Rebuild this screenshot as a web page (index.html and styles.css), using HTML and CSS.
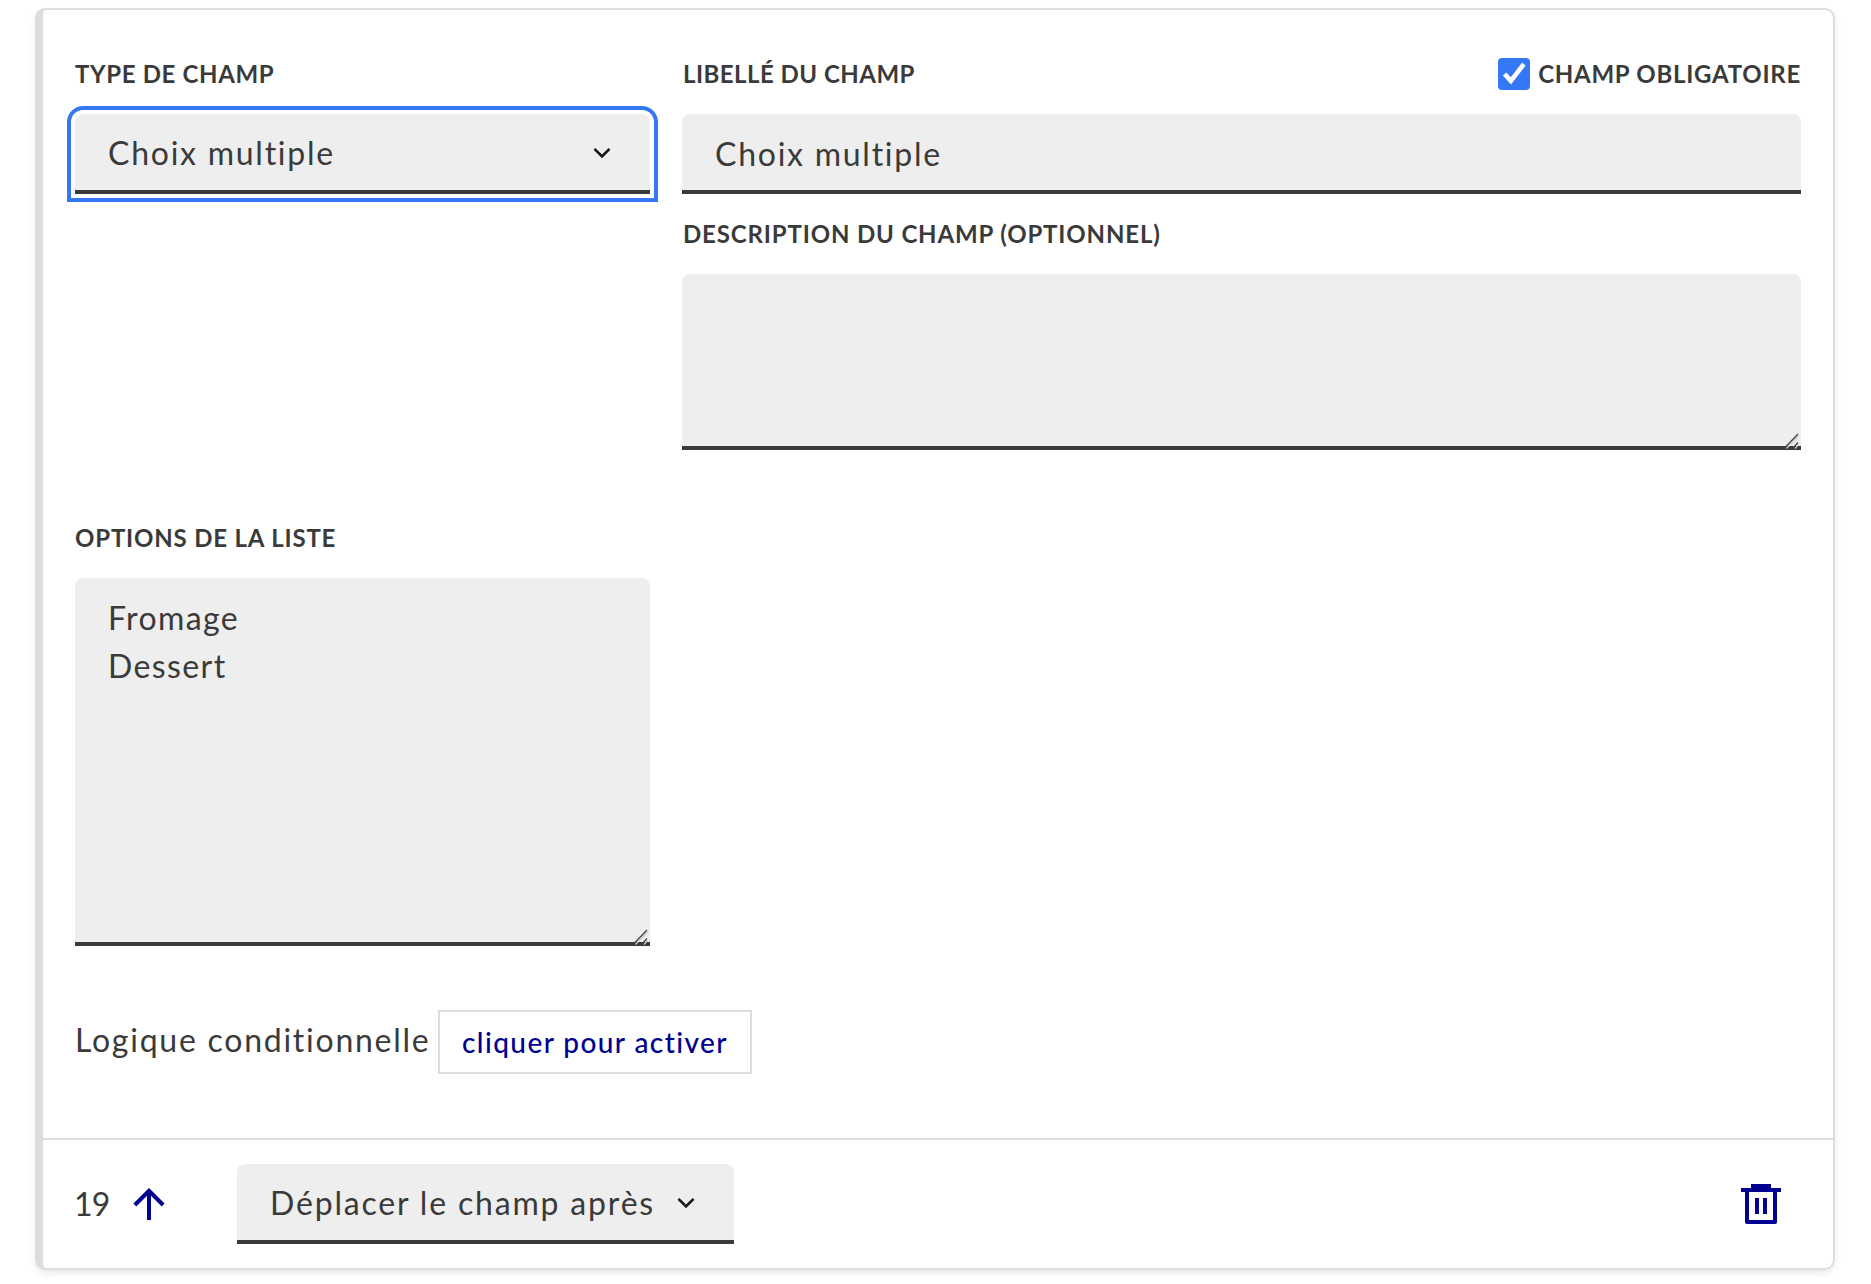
FILE: index.html
```html
<!DOCTYPE html>
<html lang="fr">
<head>
<meta charset="utf-8">
<title>Éditeur de champs</title>
<link rel="stylesheet" href="styles.css">
</head>
<body>
<article class="card">
  <div class="card-body">
    <div class="columns">
      <div class="col-type">
        <div class="label-row"><label class="label label-type" for="type">Type de champ</label></div>
        <button class="field select is-focused" id="type" type="button">
          <span>Choix multiple</span>
          <svg class="chevron" viewBox="0 0 24 24"><path d="M12 13.172l4.95-4.95 1.414 1.414L12 16 5.636 9.636 7.05 8.222z"/></svg>
        </button>
      </div>
      <div class="col-main">
        <div class="label-row">
          <label class="label label-name" for="name">Libellé du champ</label>
          <label class="mandatory">
            <svg class="checkbox" viewBox="0 0 32 32"><rect width="32" height="32" rx="4"/><path d="M6.6 16l6.3 6.9L25.8 6.2"/></svg>
            <span class="label label-mandatory">Champ obligatoire</span>
          </label>
        </div>
        <input class="field" id="name" type="text" value="Choix multiple">
        <div class="label-row description-label"><label class="label label-description" for="description">Description du champ (optionnel)</label></div>
        <div class="area">
          <textarea class="field description" id="description"></textarea>
          <svg class="grip" viewBox="0 0 20 20"><path class="grip-light" d="M6.5 18.5L18.5 6M15 18.5l3.5-4"/><path d="M5 17.5L18 4M13.5 17.5L18 12.5"/></svg>
        </div>
      </div>
    </div>
    <div class="options">
      <div class="label-row"><label class="label label-options" for="options">Options de la liste</label></div>
      <div class="area">
        <textarea class="field options-list" id="options">Fromage
Dessert</textarea>
        <svg class="grip" viewBox="0 0 20 20"><path class="grip-light" d="M6.5 18.5L18.5 6M15 18.5l3.5-4"/><path d="M5 17.5L18 4M13.5 17.5L18 12.5"/></svg>
      </div>
    </div>
    <div class="condition">
      <span class="condition-text">Logique conditionnelle</span>
      <button class="activate" type="button">cliquer pour activer</button>
    </div>
  </div>
  <footer class="card-footer">
    <span class="position">19</span>
    <svg class="icon move-up" viewBox="0 0 24 24"><path d="M13 7.828V20h-2V7.828l-5.364 5.364-1.414-1.414L12 4l7.778 7.778-1.414 1.414z"/></svg>
    <button class="field select move" type="button">
      <span>Déplacer le champ après</span>
      <svg class="chevron" viewBox="0 0 24 24"><path d="M12 13.172l4.95-4.95 1.414 1.414L12 16 5.636 9.636 7.05 8.222z"/></svg>
    </button>
    <svg class="icon delete" viewBox="0 0 24 24"><path fill-rule="evenodd" d="M7 2h10v2h5v2h-2v15a1 1 0 0 1-1 1H5a1 1 0 0 1-1-1V6H2V4h5zM6 6v14h12V6zM9 9h2v8H9zM13 9h2v8h-2z"/></svg>
  </footer>
</article>
</body>
</html>
```
FILE: styles.css
```css
* { box-sizing: border-box; }

body {
  margin: 0;
  padding: 8px 36px 14px 35px;
  background: #fff;
  color: #3a3a3a;
  font: 32px/48px Lato, "Open Sans", sans-serif;
  font-variant-ligatures: none;
  letter-spacing: 1.75px;
}

.card {
  border: 2px solid #ddd;
  border-left-width: 8px;
  border-radius: 10px;
  box-shadow: 0 4px 8px -2px rgba(0, 0, 0, 0.12);
}

.card-body { padding: 48px 32px 64px; }

.columns { display: grid; grid-template-columns: 575px 1fr; column-gap: 32px; }

.label-row {
  display: flex;
  justify-content: space-between;
  height: 32px;
  margin-bottom: 24px;
}

.description-label { margin-top: 24px; }

.label {
  font-size: 24px;
  line-height: 32px;
  font-weight: 700;
  text-transform: uppercase;
}

.label-type { letter-spacing: 0.65px; }
.label-name { padding-left: 1px; letter-spacing: 0.48px; }
.label-description { padding-left: 1px; letter-spacing: 0.85px; }
.label-options { letter-spacing: 0.82px; }
.label-mandatory { letter-spacing: 0.74px; }

.mandatory { display: flex; gap: 8px; }

.checkbox { width: 32px; height: 32px; fill: #3478f6; }
.checkbox path { fill: none; stroke: #fff; stroke-width: 4.6; }

.field {
  display: block;
  width: 100%;
  height: 80px;
  margin: 0;
  padding: 15px 32px 13px 33px;
  border: 0;
  border-bottom: 4px solid #3a3a3a;
  border-radius: 8px 8px 0 0;
  background: #eee;
  color: inherit;
  font: inherit;
  letter-spacing: inherit;
  text-align: left;
  resize: none;
  outline: 0;
}

.select {
  display: flex;
  justify-content: space-between;
  align-items: center;
}

.is-focused { outline: 4px solid #3478f6; outline-offset: 4px; }

.chevron { width: 32px; height: 32px; margin-top: -1px; fill: #161616; }

.area { position: relative; }

.description { height: 176px; }
.options-list { height: 368px; padding-top: 16px; letter-spacing: 1.4px; }

.grip {
  position: absolute;
  right: 1px;
  bottom: 0;
  width: 20px;
  height: 20px;
  fill: none;
  stroke: #444;
  stroke-width: 1.3;
}
.grip-light { stroke: #ccc; }

.options { width: 575px; margin-top: 72px; }

.condition { display: flex; gap: 9px; margin-top: 64px; }
.condition-text { width: 354px; padding-top: 6px; white-space: nowrap; }

.activate {
  width: 314px;
  height: 64px;
  padding: 0 0 1px;
  border: 2px solid #ddd;
  background: #fff;
  color: #000091;
  font: 500 28px/48px Lato, "Open Sans", sans-serif;
  letter-spacing: 1.42px;
}

.card-footer {
  display: flex;
  align-items: center;
  padding: 24px 32px;
  border-top: 2px solid #ddd;
}

.position { width: 50px; margin-left: -1px; letter-spacing: -0.8px; }

.icon { width: 48px; height: 48px; fill: #000091; }
.move-up { margin-left: 1px; }

.move { width: 497px; margin-left: 64px; letter-spacing: 1.82px; }

.delete { margin-left: auto; margin-right: 16px; }
```
